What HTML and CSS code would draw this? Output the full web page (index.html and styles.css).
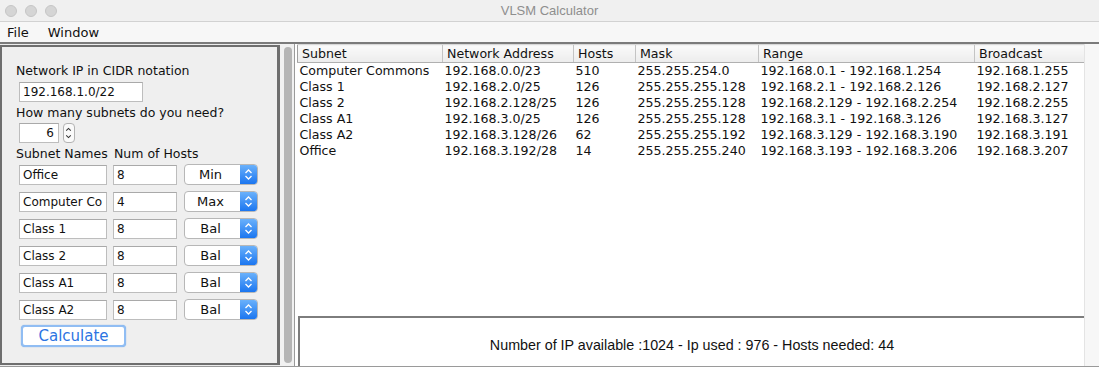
FILE: index.html
```html
<!DOCTYPE html>
<html lang="en">
<head>
    <meta charset="UTF-8">
    <title>VLSM Calculator</title>
    <link rel="stylesheet" href="styles.css">
</head>
<body>
    <div class="window">
        <div class="titlebar">
            <div class="lights">
                <span class="light"></span>
                <span class="light"></span>
                <span class="light"></span>
            </div>
            <div class="title">VLSM Calculator</div>
        </div>

        <div class="menubar">
            <span class="menu-item">File</span>
            <span class="menu-item">Window</span>
        </div>

        <div class="main">
            <!-- panel de entrada -->
            <section class="left">
                <div class="label">Network IP in CIDR notation</div>
                <div class="field ip-field">192.168.1.0/22</div>

                <div class="label label-gap">How many subnets do you need?</div>
                <div class="spinner-row">
                    <div class="field spin-field">6</div>
                    <div class="stepper">
                        <svg width="12" height="20" viewBox="0 0 12 20">
                            <path d="M3.5 7.5 L6 5 L8.5 7.5" fill="none" stroke="#333" stroke-width="1.1"/>
                            <path d="M3.5 12.5 L6 15 L8.5 12.5" fill="none" stroke="#333" stroke-width="1.1"/>
                        </svg>
                    </div>
                </div>

                <div class="col-labels">
                    <span class="col-name">Subnet Names</span>
                    <span>Num of Hosts</span>
                </div>

                <div class="rows">
                    <div class="row">
                        <div class="field name-field">Office</div>
                        <div class="field hosts-field">8</div>
                        <div class="combo"><span class="combo-text">Min</span><span class="combo-arrow"></span></div>
                    </div>
                    <div class="row">
                        <div class="field name-field">Computer Co</div>
                        <div class="field hosts-field">4</div>
                        <div class="combo"><span class="combo-text">Max</span><span class="combo-arrow"></span></div>
                    </div>
                    <div class="row">
                        <div class="field name-field">Class 1</div>
                        <div class="field hosts-field">8</div>
                        <div class="combo"><span class="combo-text">Bal</span><span class="combo-arrow"></span></div>
                    </div>
                    <div class="row">
                        <div class="field name-field">Class 2</div>
                        <div class="field hosts-field">8</div>
                        <div class="combo"><span class="combo-text">Bal</span><span class="combo-arrow"></span></div>
                    </div>
                    <div class="row">
                        <div class="field name-field">Class A1</div>
                        <div class="field hosts-field">8</div>
                        <div class="combo"><span class="combo-text">Bal</span><span class="combo-arrow"></span></div>
                    </div>
                    <div class="row">
                        <div class="field name-field">Class A2</div>
                        <div class="field hosts-field">8</div>
                        <div class="combo"><span class="combo-text">Bal</span><span class="combo-arrow"></span></div>
                    </div>
                </div>

                <button class="calc-btn">Calculate</button>
            </section>

            <div class="divider">
                <div class="thumb"></div>
            </div>

            <!-- resultados -->
            <section class="right">
                <div class="results">
                    <div class="table-area">
                        <table class="subnets">
                            <colgroup>
                                <col style="width:145px">
                                <col style="width:131px">
                                <col style="width:62px">
                                <col style="width:123px">
                                <col style="width:216px">
                                <col style="width:109px">
                            </colgroup>
                            <thead>
                                <tr>
                                    <th>Subnet</th>
                                    <th>Network Address</th>
                                    <th>Hosts</th>
                                    <th>Mask</th>
                                    <th>Range</th>
                                    <th>Broadcast</th>
                                </tr>
                            </thead>
                            <tbody>
                                <tr><td>Computer Commons</td><td>192.168.0.0/23</td><td>510</td><td>255.255.254.0</td><td>192.168.0.1 - 192.168.1.254</td><td>192.168.1.255</td></tr>
                                <tr><td>Class 1</td><td>192.168.2.0/25</td><td>126</td><td>255.255.255.128</td><td>192.168.2.1 - 192.168.2.126</td><td>192.168.2.127</td></tr>
                                <tr><td>Class 2</td><td>192.168.2.128/25</td><td>126</td><td>255.255.255.128</td><td>192.168.2.129 - 192.168.2.254</td><td>192.168.2.255</td></tr>
                                <tr><td>Class A1</td><td>192.168.3.0/25</td><td>126</td><td>255.255.255.128</td><td>192.168.3.1 - 192.168.3.126</td><td>192.168.3.127</td></tr>
                                <tr><td>Class A2</td><td>192.168.3.128/26</td><td>62</td><td>255.255.255.192</td><td>192.168.3.129 - 192.168.3.190</td><td>192.168.3.191</td></tr>
                                <tr><td>Office</td><td>192.168.3.192/28</td><td>14</td><td>255.255.255.240</td><td>192.168.3.193 - 192.168.3.206</td><td>192.168.3.207</td></tr>
                            </tbody>
                        </table>
                    </div>
                    <div class="summary">Number of IP available :1024 - Ip used : 976 - Hosts needed: 44</div>
                </div>
                <div class="vscroll"></div>
            </section>
        </div>
    </div>
</body>
</html>
```

FILE: styles.css
```css
/* Estilos generales */
* {
    box-sizing: border-box;
    margin: 0;
    padding: 0;
}

body {
    font-family: "DejaVu Sans", sans-serif;
    background-color: #ececec;
    color: #111;
    overflow: hidden;
}

.window {
    width: 1099px;
    height: 367px;
    display: flex;
    flex-direction: column;
    background-color: #ececec;
}

/* barra de titulo */
.titlebar {
    height: 22px;
    position: relative;
    background-color: #f0f0f0;
    border-bottom: 1px solid #d2d2d2;
    display: flex;
    align-items: center;
    justify-content: center;
}

.lights {
    position: absolute;
    left: 5px;
    top: 5px;
    display: flex;
    gap: 8px;
}

.light {
    width: 12px;
    height: 12px;
    border-radius: 50%;
    background-color: #d5d5d5;
    border: 1px solid #c6c6c6;
}

.title {
    font-family: "Liberation Sans", sans-serif;
    font-size: 13px;
    color: #8e8e8e;
}

/* menu */
.menubar {
    height: 20px;
    background-color: #f7f7f7;
    display: flex;
    align-items: center;
    padding-left: 7px;
    gap: 19px;
    font-size: 13px;
}

.main {
    flex: 1;
    display: flex;
    border-top: 2px solid #7b7b7b;
    border-bottom: 1px solid #9a9a9a;
    min-height: 0;
}

/* panel izquierdo */
.left {
    width: 280px;
    margin-top: 1px;
    margin-bottom: 1px;
    border: 2px solid #6e6e6e;
    border-right-width: 3px;
    background-color: #efefef;
    padding: 16px 0 0 14px;
    font-size: 12.5px;
}

.label {
    line-height: 16px;
}

.label-gap {
    margin-top: 3px;
}

.field {
    height: 20px;
    background-color: #fff;
    border: 1px solid #bdbdbd;
    border-top-color: #a9a9a9;
    font-size: 12px;
    line-height: 18px;
    padding-left: 3px;
    white-space: nowrap;
    overflow: hidden;
}

.ip-field {
    width: 124px;
    margin: 3px 0 0 3px;
}

.spinner-row {
    display: flex;
    align-items: center;
    gap: 4px;
    margin: 2px 0 0 3px;
}

.spin-field {
    width: 40px;
    text-align: right;
    padding-right: 4px;
}

.stepper {
    width: 12px;
    height: 20px;
    border: 1px solid #b3b3b3;
    border-radius: 4px;
    background-color: #fafafa;
    display: flex;
}

.stepper svg {
    margin-left: -1px;
    margin-top: -1px;
}

.col-labels {
    margin-top: 3px;
    line-height: 16px;
    display: flex;
}

.col-name {
    width: 98px;
}

.rows {
    display: flex;
    flex-direction: column;
    gap: 6px;
    margin: 2px 0 0 3px;
}

.row {
    display: flex;
    align-items: center;
}

.name-field {
    width: 88px;
    margin-right: 6px;
}

.hosts-field {
    width: 64px;
    margin-right: 7px;
}

.combo {
    width: 74px;
    height: 21px;
    display: flex;
    border: 1px solid #b7b7b7;
    border-radius: 4px;
    background-color: #fff;
    overflow: hidden;
    font-size: 13px;
}

.combo-text {
    flex: 1;
    text-align: center;
    line-height: 19px;
    padding-right: 4px;
}

.combo-arrow {
    width: 17px;
    background-image:
        url("data:image/svg+xml,%3Csvg xmlns='http://www.w3.org/2000/svg' width='17' height='19'%3E%3Cpath d='M5.5 8 L8.5 5 L11.5 8 M5.5 11 L8.5 14 L11.5 11' fill='none' stroke='white' stroke-width='1.3'/%3E%3C/svg%3E"),
        linear-gradient(#6ab1fb, #1b76f0);
}

.calc-btn {
    display: block;
    width: 105px;
    height: 22px;
    margin: 5px 0 0 5px;
    background-color: #fff;
    border: 2px solid #90bdf3;
    border-radius: 4px;
    box-shadow: 0 0 1px #5b9de8;
    color: #2c74e2;
    font-family: "DejaVu Sans", sans-serif;
    font-size: 15px;
    line-height: 17px;
}

/* separador */
.divider {
    width: 15px;
    background-color: #f1f1f1;
    padding: 3px 3px 3px 4px;
    border-right: 1px solid #9b9b9b;
}

.thumb {
    width: 8px;
    height: 100%;
    border-radius: 4px;
    background-color: #b5b5b5;
}

/* panel derecho */
.right {
    flex: 1;
    display: flex;
    background-color: #fff;
}

.results {
    flex: 1;
    display: flex;
    flex-direction: column;
}

.table-area {
    flex: 1;
    padding-left: 2px;
}

.subnets {
    table-layout: fixed;
    border-collapse: collapse;
    width: 786px;
    font-size: 12.6px;
}

.subnets th {
    height: 18px;
    text-align: left;
    font-weight: normal;
    padding-left: 4px;
    background: linear-gradient(#fafafa, #ececec);
    border-left: 1px solid #c4c4c4;
    border-bottom: 1px solid #b0b0b0;
    border-top: 1px solid #d8d8d8;
}

.subnets th:first-child {
    border-left: 1px solid #a0a0a0;
}

.subnets td {
    height: 16px;
    line-height: 16px;
    padding-left: 2px;
    white-space: nowrap;
}

.summary {
    height: 50px;
    margin-left: 3px;
    border-top: 2px solid #7d7d7d;
    border-left: 2px solid #7d7d7d;
    text-align: center;
    padding-top: 19px;
    font-family: "Liberation Sans", sans-serif;
    font-size: 14.3px;
}

.vscroll {
    width: 15px;
    background-color: #f7f7f7;
    border-left: 1px solid #e4e4e4;
}
```
